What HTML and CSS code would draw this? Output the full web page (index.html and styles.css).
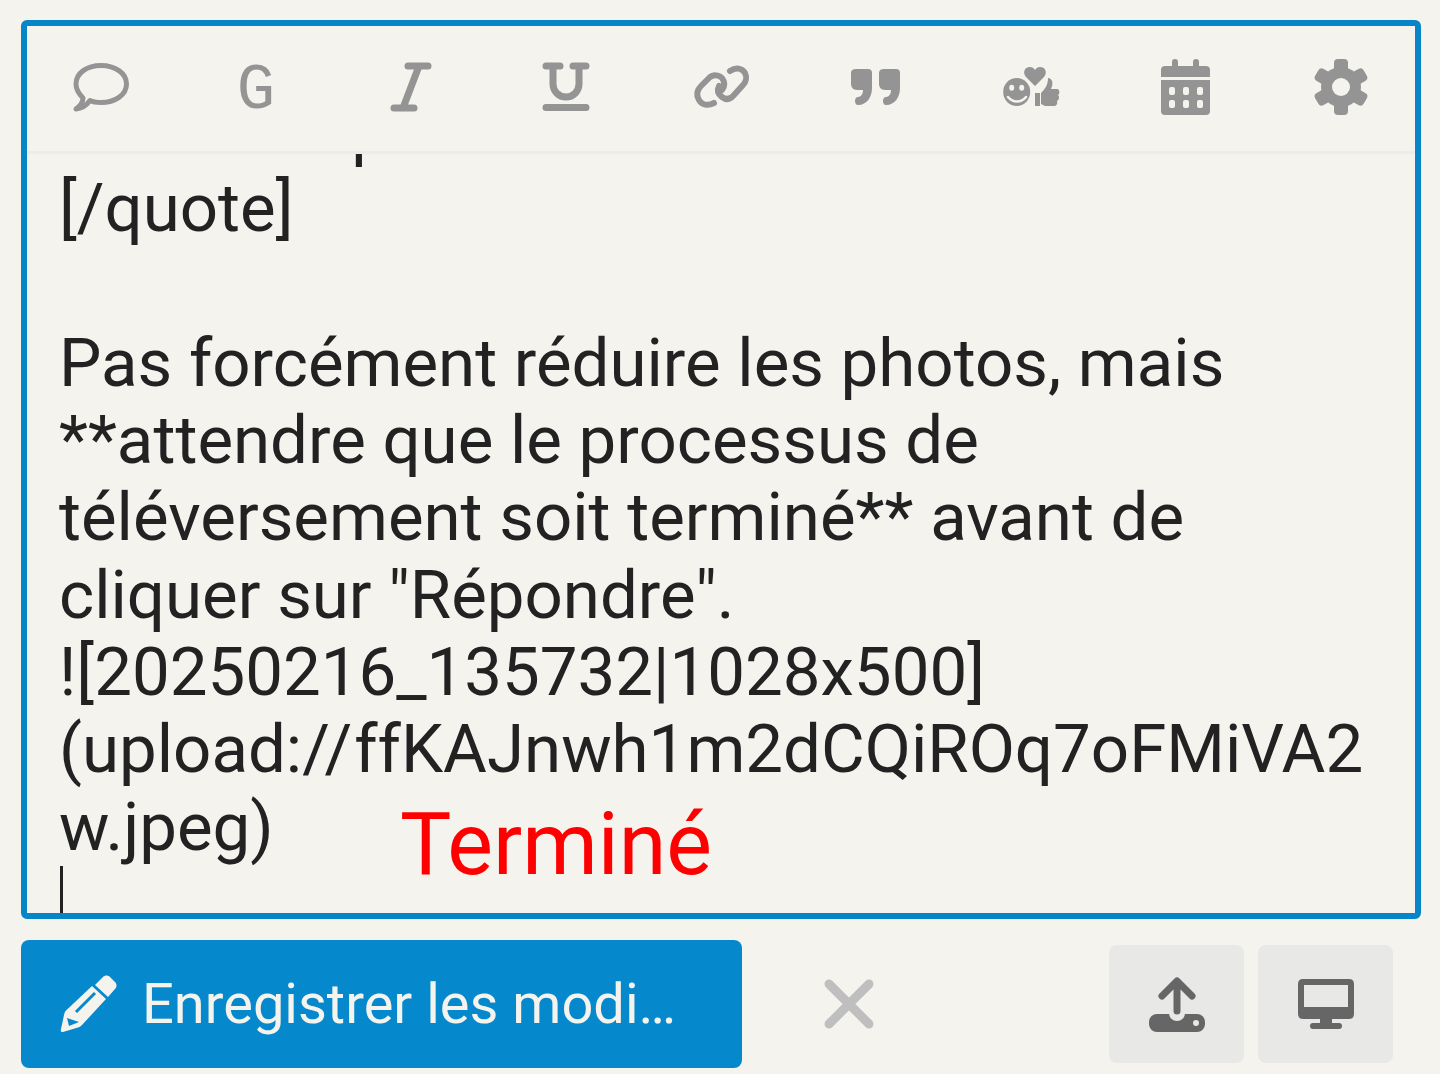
FILE: index.html
```html
<!DOCTYPE html>
<html lang="fr">
<head>
    <meta charset="UTF-8">
    <meta name="viewport" content="width=device-width, initial-scale=1.0">
    <title>Éditeur</title>
    <link rel="stylesheet" href="styles.css">
</head>
<body>
    <!-- Editor -->
    <div class="editor">
        <div class="toolbar">
            <button class="tool">
                <svg viewBox="0 0 56 56"><path class="line" d="M10 39C5 34 3 30 3 25 3 14 14 6.500 28 6.500 42 6.500 53.500 14 53.500 25 53.500 36 42 43.500 28 43.500 24 43.500 20 43 17 41.500 13 47 8 49.500 3 50 7 47 10 43 10 39Z"/></svg>
            </button>
            <button class="tool tool-text">G</button>
            <button class="tool">
                <svg viewBox="0 0 56 56"><path class="line round" d="M25 7H45M11 49H31M36 7 20 49"/></svg>
            </button>
            <button class="tool">
                <svg viewBox="0 0 56 56"><path class="line round" d="M8 7H22M35 7H48M15 7V25A13 13 0 0 0 41 25V7M8 48.500H48"/></svg>
            </button>
            <button class="tool">
                <svg viewBox="0 0 56 56"><path class="line chain" d="M21 44C15 47 9 46 6 41 3 36 4 31 8 27L16 19C20 15 26 16 29 19 32 23 32 27 29 31M37 12C43 8 49 9 52 14 54 18 53 23 50 26L41 36C37 41 33 41 29 38 25 35 24 31 26 27"/></svg>
            </button>
            <button class="tool">
                <svg viewBox="0 0 56 56"><g class="solid"><path id="q" d="M8 10H20Q24 10 24 14V29C24 38 19 46 10 46 6 46 6 38 10 38 13 38 15 35 15 31H9C5 31 3 28 3 25V14Q3 10 8 10Z"/><use href="#q" x="28"/></g></svg>
            </button>
            <button class="tool">
                <svg viewBox="0 0 56 56">
                    <g class="solid">
                        <ellipse cx="13.700" cy="33" rx="13.500" ry="14"/>
                        <path d="M32 27 23 18C19 13 22 8 27 8 29 8 31 9 32 11 33 9 35 8 37 8 42 8 45 13 41 18Z"/>
                        <path d="M32 34H37V47H32ZM38 34C42 30 45 26 45 19 49 19 51 24 48 30H54C57 30 57 35 55 36 57 38 56 41 54 42 55 45 53 47 51 47H42L38 45Z"/>
                    </g>
                    <g class="cut">
                        <ellipse cx="8.700" cy="28.700" rx="2.500" ry="3"/>
                        <ellipse cx="18.700" cy="28.700" rx="2.500" ry="3"/>
                    </g>
                    <path class="smile" d="M5 38C10 44 18 44 23 38"/>
                </svg>
            </button>
            <button class="tool">
                <svg viewBox="0 0 56 56">
                    <path class="solid" d="M14 7V3A3 3 0 0 1 20 3V7H35V3A3 3 0 0 1 41 3V7H48Q52 7 52 11V18H3V11Q3 7 7 7ZM3 21H52V52Q52 56 48 56H7Q3 56 3 52Z"/>
                    <g class="cut">
                        <rect x="11" y="28" width="6" height="8" rx="2"/><rect x="25" y="28" width="6" height="8" rx="2"/><rect x="39" y="28" width="6" height="8" rx="2"/>
                        <rect x="11" y="41" width="6" height="8" rx="2"/><rect x="25" y="41" width="6" height="8" rx="2"/><rect x="39" y="41" width="6" height="8" rx="2"/>
                    </g>
                </svg>
            </button>
            <button class="tool">
                <svg viewBox="0 0 56 56">
                    <g class="solid">
                        <circle cx="28" cy="28" r="20"/>
                        <rect x="21" y="0" width="14" height="56" rx="4"/>
                        <rect x="21" y="0" width="14" height="56" rx="4" transform="rotate(60 28 28)"/>
                        <rect x="21" y="0" width="14" height="56" rx="4" transform="rotate(120 28 28)"/>
                    </g>
                    <circle class="cut" cx="28" cy="28" r="9"/>
                </svg>
            </button>
        </div>
        <div class="content">
            <div class="text clipped-line">Une vraie pour le moment.</div>
            <div class="text">[/quote]<br><br>Pas forcément réduire les photos, mais<br>**attendre que le processus de<br>téléversement soit terminé** avant de<br>cliquer sur "Répondre".<br>![20250216_135732|1028x500]<br>(upload:<span class="slashes">//</span>ffKAJnwh1m2dCQiROq7oFMiVA2<br>w.jpeg)</div>
            <div class="caret"></div>
            <span class="note">Terminé</span>
        </div>
    </div>

    <!-- Footer buttons -->
    <div class="footer">
        <button class="save">
            <svg viewBox="0 0 56 56">
                <path class="save-fill" d="M35 9 43 1C45 -1 48 -1 50 1L55 6C57 8 57 11 55 13L48 21ZM5.500 35 32 10 46 23 22 49Q20 51 18 51.500L3 56Q0 56.500 1 53L4 39Q4.500 36.500 5.500 35Z"/>
                <path class="save-cut" d="M16 36 35 17"/>
                <path class="save-notch" d="M7 42 19 46 9 50Z"/>
            </svg>
            <span class="save-label">Enregistrer les modifications</span>
        </button>
        <button class="cancel">
            <svg viewBox="0 0 50 50"><path d="M5 5 45 45M45 5 5 45"/></svg>
        </button>
        <div class="side-buttons">
            <button class="side-btn">
                <svg viewBox="0 0 56 56">
                    <rect class="side-fill" x="0" y="38" width="56" height="18" rx="8"/>
                    <circle class="side-cut" cx="28" cy="37" r="8"/>
                    <circle class="side-cut" cx="47" cy="47" r="3"/>
                    <path class="side-line" d="M28 6V35M13 20 28 5 43 20"/>
                </svg>
            </button>
            <button class="side-btn">
                <svg viewBox="0 0 56 50">
                    <path class="side-fill" d="M5 0H51Q56 0 56 5V35Q56 40 51 40H34V44H41Q44 44 44 47 44 50 41 50H15Q12 50 12 47 12 44 15 44H22V40H5Q0 40 0 35V5Q0 0 5 0ZM6 6V28H50V6Z"/>
                </svg>
            </button>
        </div>
    </div>
</body>
</html>
```

FILE: styles.css
```css
* {
    box-sizing: border-box;
}
body {
    margin: 0;
    height: 1074px;
    padding: 20px 19px 6px 21px;
    background-color: #f4f3ee;
    font-family: Roboto, sans-serif;
    overflow: hidden;
}
button {
    border: none;
    background: none;
    padding: 0;
    font-family: inherit;
}
.editor {
    height: 899px;
    border: 6px solid #0686c9;
    border-radius: 6px;
    display: flex;
    flex-direction: column;
}
.toolbar {
    flex: none;
    height: 128px;
    padding: 0 0 3px 46px;
    border-bottom: 3px solid #ecece8;
    display: flex;
    align-items: center;
    gap: 99px;
}
.tool {
    width: 56px;
    height: 56px;
    flex: none;
}
.tool svg {
    display: block;
    width: 56px;
    height: 56px;
    overflow: visible;
}
.tool-text {
    padding-top: 8px;
    font-family: "Liberation Mono", monospace;
    font-size: 64px;
    line-height: 48px;
    color: #949494;
}
.line {
    fill: none;
    stroke: #949494;
    stroke-width: 5;
    stroke-linejoin: round;
}
.round {
    stroke-width: 7;
    stroke-linecap: round;
}
.chain {
    stroke-width: 6;
    stroke-linecap: round;
}
.solid {
    fill: #949494;
}
.cut {
    fill: #f4f3ee;
}
.smile {
    fill: none;
    stroke: #f4f3ee;
    stroke-width: 2.500;
    stroke-linecap: round;
}
.content {
    flex: 1;
    min-height: 0;
    position: relative;
    overflow: hidden;
    padding-left: 32px;
    display: flex;
    flex-direction: column;
    justify-content: flex-end;
}
.text {
    flex: none;
    font-size: 67.200px;
    line-height: 77.330px;
    color: #222;
    white-space: nowrap;
}
.clipped-line {
    margin-bottom: 1px;
}
.slashes {
    letter-spacing: 2px;
}
.caret {
    flex: none;
    width: 3px;
    height: 47px;
    margin-left: 1px;
    background-color: #222;
}
.note {
    position: absolute;
    left: 373px;
    top: 641px;
    font-family: Roboto, sans-serif;
    font-size: 86.200px;
    line-height: 100px;
    color: #ff0000;
}
.footer {
    height: 128px;
    margin-top: 21px;
    padding-right: 28px;
    display: flex;
    align-items: center;
}
.save {
    width: 721px;
    height: 128px;
    flex: none;
    padding: 0 60px 0 39px;
    background-color: #0688cc;
    border-radius: 8px;
    display: flex;
    align-items: center;
    gap: 26px;
}
.save svg {
    width: 56px;
    height: 56px;
    flex: none;
    overflow: visible;
}
.save-fill {
    fill: #f4f3ee;
}
.save-cut {
    fill: none;
    stroke: #0688cc;
    stroke-width: 3;
}
.save-notch {
    fill: #0688cc;
}
.save-label {
    flex: 1;
    min-width: 0;
    font-size: 56px;
    color: #f4f3ee;
    white-space: nowrap;
    overflow: hidden;
    text-overflow: ellipsis;
    text-align: left;
}
.cancel {
    width: 50px;
    height: 50px;
    margin-left: 82px;
    flex: none;
}
.cancel svg {
    display: block;
    width: 50px;
    height: 50px;
    overflow: visible;
}
.cancel path {
    fill: none;
    stroke: #bfbfbf;
    stroke-width: 9;
    stroke-linecap: round;
}
.side-buttons {
    margin-left: auto;
    display: flex;
    gap: 14px;
}
.side-btn {
    width: 135px;
    height: 118px;
    background-color: #e8e8e6;
    border-radius: 8px;
    display: flex;
    align-items: center;
    justify-content: center;
}
.side-btn svg {
    width: 56px;
    height: 56px;
}
.side-fill {
    fill: #666;
}
.side-cut {
    fill: #e8e8e6;
}
.side-line {
    fill: none;
    stroke: #666;
    stroke-width: 7;
    stroke-linecap: round;
    stroke-linejoin: round;
}
```
